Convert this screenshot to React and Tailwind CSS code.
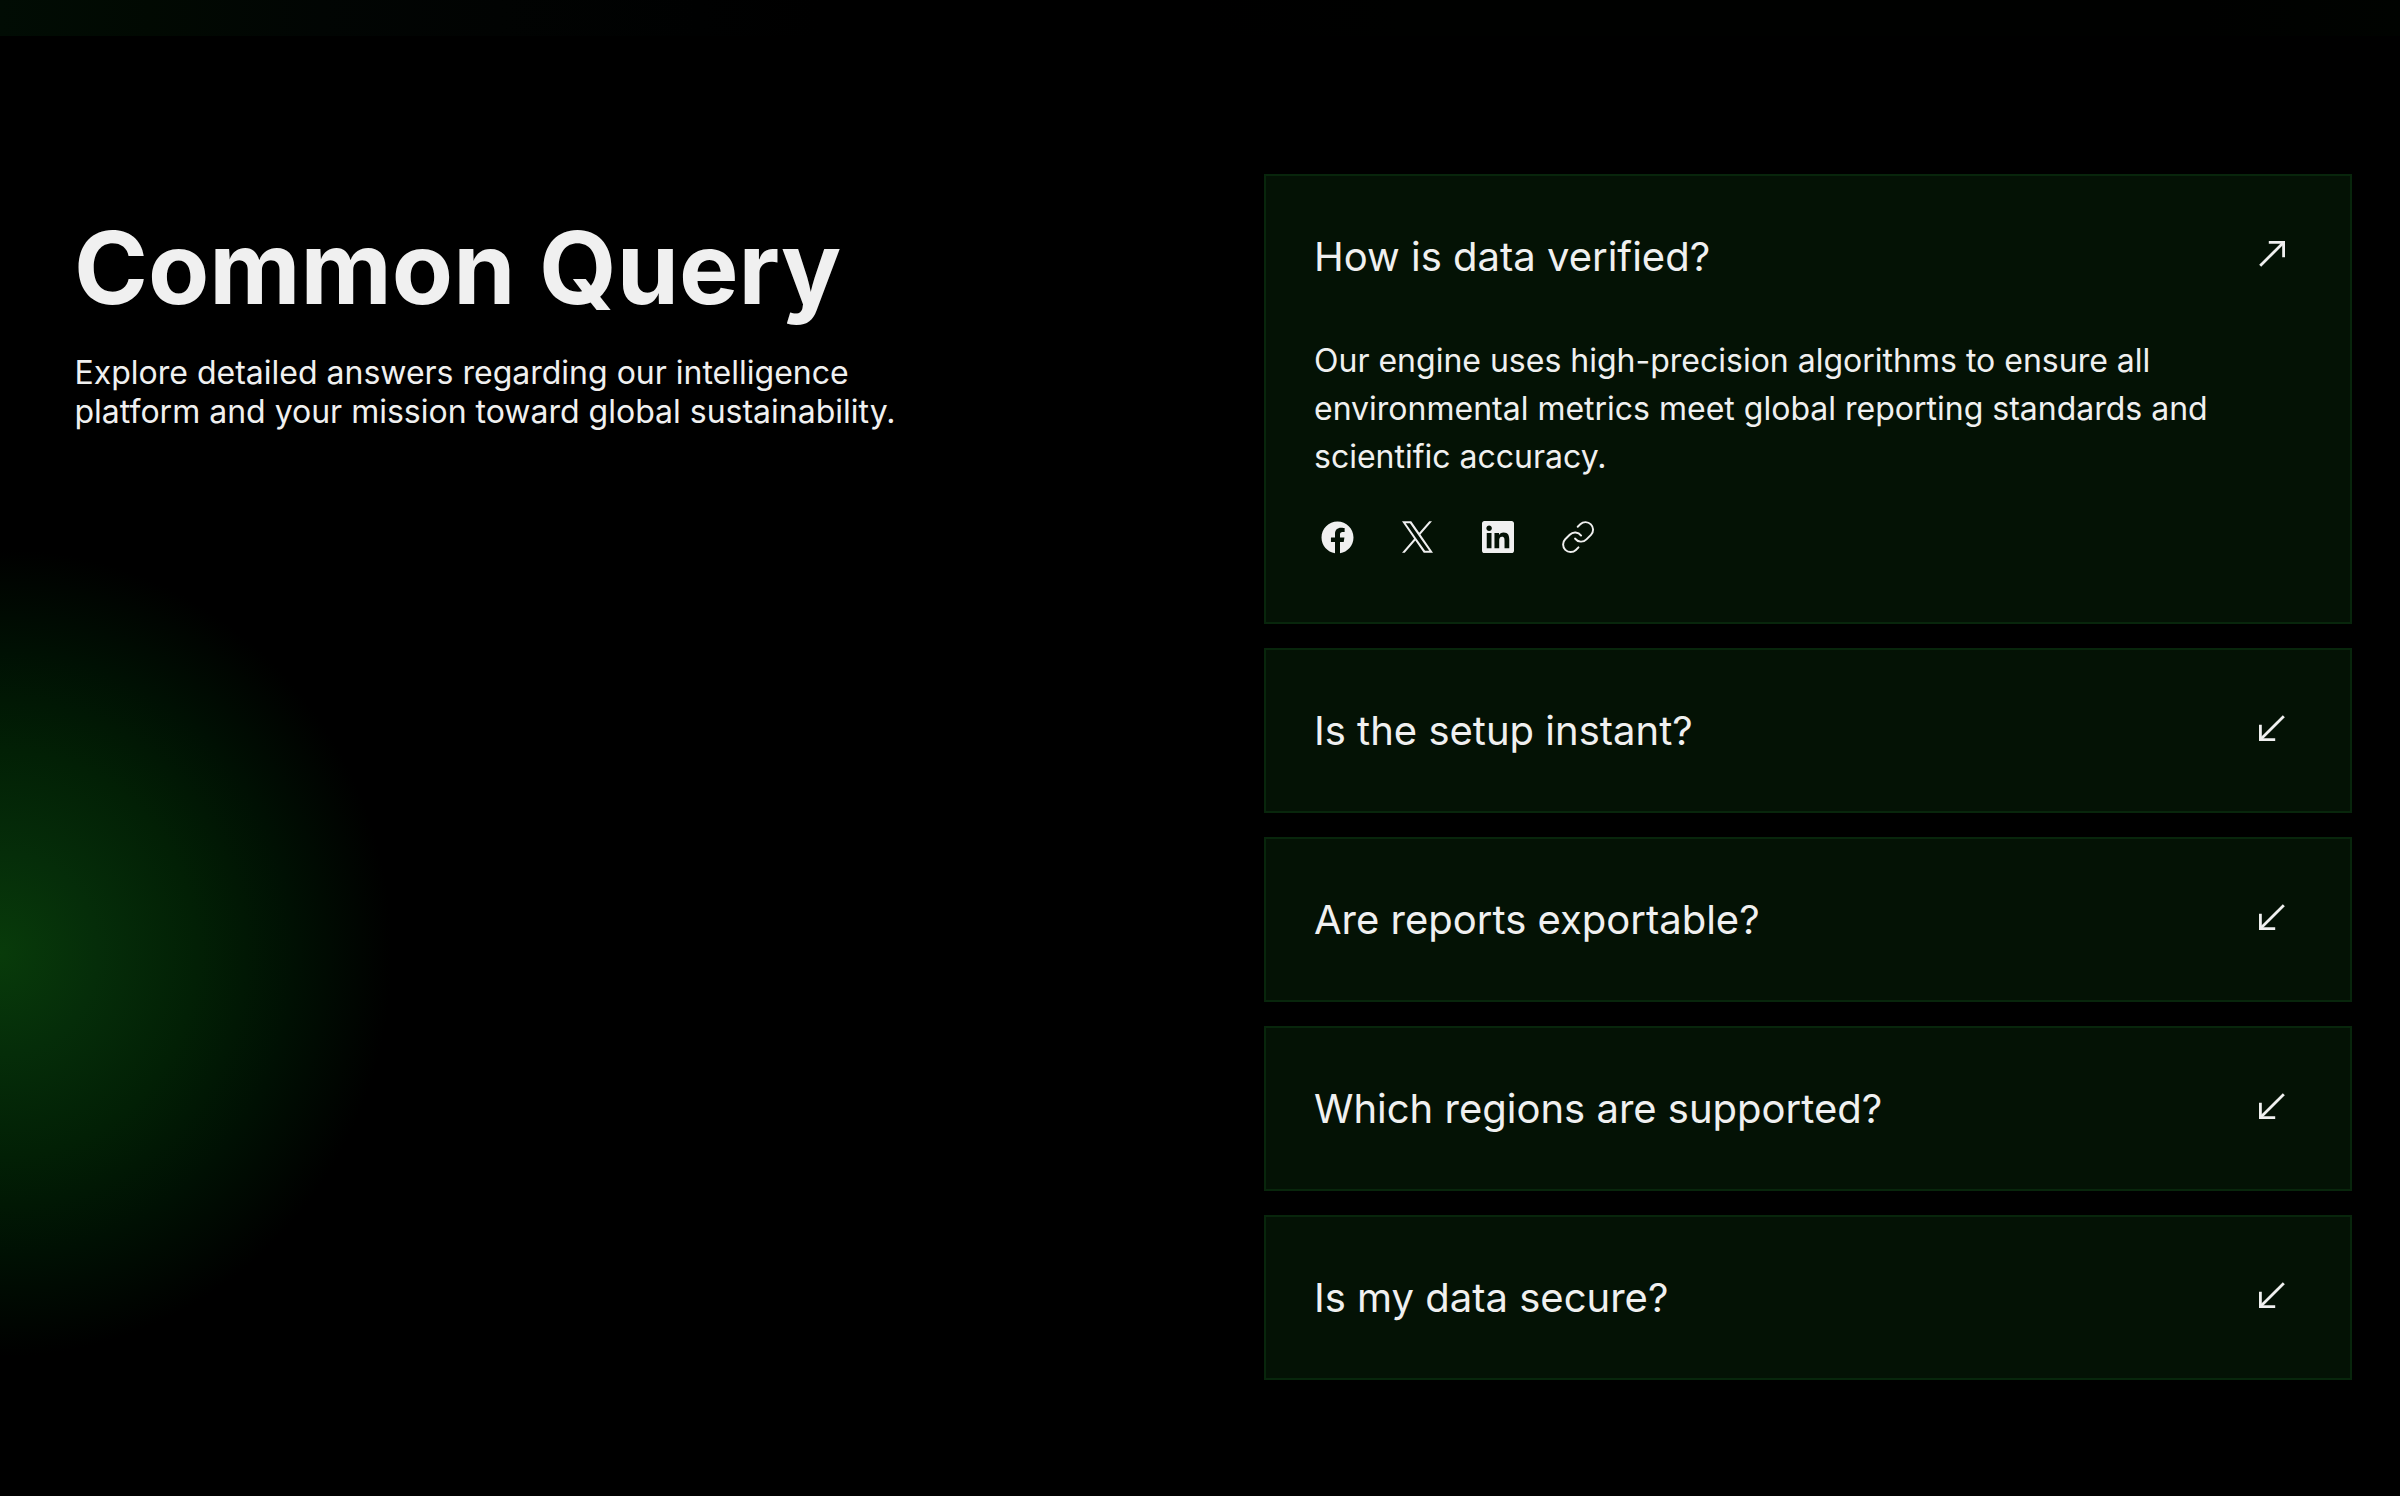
import { FaFacebook } from "react-icons/fa";
import { SiLinkedin } from "react-icons/si";
import { Link } from "lucide-react";

function Arrow({ open }) {
  return (
    <svg
      viewBox="0 0 26 26"
      fill="none"
      stroke="currentColor"
      strokeWidth="2.8"
      className={`mt-[9px] mr-[17px] size-[26px] shrink-0 ${open ? "" : "rotate-180"}`}
    >
      <path d="M9.8 1.4H24.6V16.2" />
      <path d="M24.3 1.7L1.2 24.8" />
    </svg>
  );
}

function XLogo() {
  return (
    <svg viewBox="0 0 1200 1227" fill="currentColor" className="-ml-px h-8 w-[31px]">
      <path d="M714.163 519.284L1160.89 0H1055.03L667.137 450.887L357.328 0H0L468.492 681.821L0 1226.37H105.866L515.491 750.218L842.672 1226.37H1200L714.137 519.284H714.163ZM569.165 687.828L521.697 619.934L144.011 79.6944H306.615L611.412 515.685L658.88 583.579L1055.08 1150.3H892.476L569.165 687.854V687.828Z" />
    </svg>
  );
}

function ShareButton({ label, children }) {
  return (
    <a aria-label={label} className="flex size-12 items-center justify-center">
      {children}
    </a>
  );
}

function Card({ question, open, children }) {
  return (
    <article className="border-2 border-[#08260c] bg-[#041205] px-12">
      <header className="flex items-start justify-between py-14">
        <h2 className="text-[40px] leading-[49px]">{question}</h2>
        <Arrow open={open} />
      </header>
      {children}
    </article>
  );
}

const questions = [
  "Is the setup instant?",
  "Are reports exportable?",
  "Which regions are supported?",
  "Is my data secure?",
];

export default function App() {
  return (
    <div className="h-[1496px] overflow-hidden bg-black font-['Inter',sans-serif] text-[#f0f0f0]">
      <div className="h-9 bg-[linear-gradient(90deg,#010c04_0px,#010902_150px,#010503_320px,#010302_500px,#000101_700px,#000000_820px,#000000_1200px,#000100_1400px,#000100_2200px,#000300_2400px)]" />
      <section className="flex h-[1460px] justify-between bg-[radial-gradient(ellipse_392px_404px_at_0px_917px,#083b0a_0%,#052d09_25%,#022005_50%,#001003_75%,#000000_100%)] pt-[138px] pr-12 pl-[74px]">
        <div className="pt-[33px]">
          <h1 className="text-[100px] leading-[121px] font-bold">Common Query</h1>
          <p className="mt-[25px] ml-[0.5px] text-[32px] leading-[39px]">
            Explore detailed answers regarding our intelligence
            <br />
            platform and your mission toward global sustainability.
          </p>
        </div>
        <div className="flex w-[1088px] flex-col gap-6">
          <Card question="How is data verified?" open>
            <p className="text-[32px] leading-[48px]">
              Our engine uses high-precision algorithms to ensure all
              <br />
              environmental metrics meet global reporting standards and
              <br />
              scientific accuracy.
            </p>
            <div className="mt-8 mb-[61px] flex gap-8">
              <ShareButton label="Facebook">
                <FaFacebook className="-ml-px size-[33px]" />
              </ShareButton>
              <ShareButton label="X">
                <XLogo />
              </ShareButton>
              <ShareButton label="LinkedIn">
                <SiLinkedin className="size-8" />
              </ShareButton>
              <ShareButton label="Copy link">
                <Link className="size-[36.2px]" strokeWidth={1.3} />
              </ShareButton>
            </div>
          </Card>
          {questions.map((q) => (
            <Card key={q} question={q} />
          ))}
        </div>
      </section>
    </div>
  );
}
